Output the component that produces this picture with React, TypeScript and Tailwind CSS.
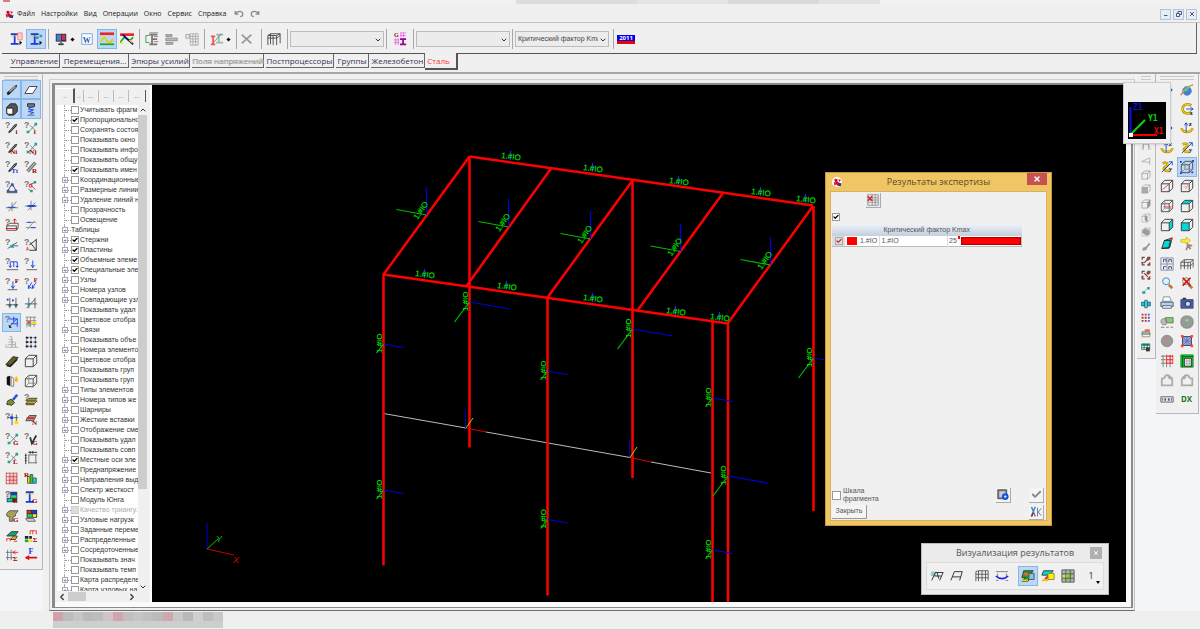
import React from 'react';
import { ChevronDown, ChevronLeft, ChevronRight, ChevronUp, Check, X } from 'lucide-react';

// Short helpers for the 16x16 toolbar drawings
const s = (d: string, stroke = '#444', w = 1) => <path d={d} stroke={stroke} strokeWidth={w} fill="none" />;
const f = (d: string, fill = '#444', stroke = 'none') => <path d={d} fill={fill} stroke={stroke} />;
const t = (x: number, y: number, str: string, fill = '#900', size = 8) => (
  <text x={x} y={y} fill={fill} fontSize={size} fontWeight="bold" fontFamily="Liberation Serif, serif">
    {str}
  </text>
);

const help = (
  <text x="0" y="8" fill="#777" fontSize="10" fontWeight="bold" fontFamily="Liberation Sans, sans-serif">
    ?
  </text>
);
const cube = (c = '#333') => s('M1.5 5.5h9v9h-9zM1.5 5.5l4-4h9l-4 4M14.5 1.5v9l-4 4', c);
const wire = (
  <>
    {cube('#444')}
    {s('M5.5 1.5v9h9M5.5 10.5l-4 4', '#888')}
  </>
);
const teal = '#00d8d8';
const beam = (
  <>
    {f('M4 12L11 4l3-1-1 3-7 7-2 1z', '#333')}
    {s('M6 11l6-6', '#999')}
  </>
);
const nodes = (
  <>
    {s('M5 13L14 3M7 5l6 6', '#777')}
    {f('M3 11h3v3H3zM12 2h3v3h-3z', '#1aa59a')}
  </>
);
const rotate = (c: string) => (
  <>
    {s('M13 4C8 1 3 3 3 8s5 6 10 4', '#b89400', 3)}
    {s('M13 4C8 1 3 3 3 8s5 6 10 4', '#ffe14a', 1)}
    {s('M7 8h8M12 6l3 2-3 2', c)}
  </>
);
const rotateZ = (
  <>
    {s('M2 8c0 6 12 6 12 0', '#b89400', 3)}
    {s('M2 8c0 6 12 6 12 0', '#ffe14a', 1)}
    {s('M7 13V2M5 5l2-3 2 3', '#14c')}
    {t(10, 6, 'z', '#222', 8)}
  </>
);
const rotateY = (
  <>
    {s('M3 4c6-3 7 2 3 4s0 6 5 4', '#b89400', 3)}
    {s('M3 4c6-3 7 2 3 4s0 6 5 4', '#ffe14a', 1)}
    {s('M2 14L14 2M10 2h4v4', '#14c')}
    {t(10, 13, 'y', '#222', 8)}
  </>
);
const section = (
  <>
    {s('M2 2.5h9M2 13.5h9', '#1439e0', 2)}
    {s('M6.5 3v10', '#1439e0', 2)}
    {s('M2 4.5h9', '#e0c800')}
  </>
);

const leftIcons: [string, React.ReactNode][] = [
  ['Стержень', <>{f('M3 14l-1-3 9-8 3-1-1 3-8 8z', '#222')}{s('M5 10l7-6', '#999', 2)}</>],
  ['Пластина', f('M1 12L6 4h9l-5 8z', '#fff', '#333')],
  ['Объемный элемент', <>{f('M2 6l4-4h6l2 3v6l-4 4H4l-2-2z', '#555', '#222')}{f('M2 7h7v7H4l-2-2z', '#fff', '#222')}</>],
  ['Специальный элемент', <>{f('M4 2h8v3l-2 1H6L4 5z', '#777', '#222')}{s('M8 6l-3 2 6 1-6 2 6 1-4 2', '#1439e0')}{s('M4 15h8', '#555')}</>],
  ['Номера стержней', <>{help}{beam}{t(12, 15, 'i')}</>],
  ['Номера узлов', <>{help}{nodes}{t(11, 15, 'i')}</>],
  ['Типы стержней', <>{help}{beam}{t(6, 15, 'Ni')}</>],
  ['Типы узлов', <>{help}{nodes}{t(6, 15, 'Nj')}</>],
  ['Типы элементов', <>{help}{beam}{t(7, 15, 'Tt', '#1439e0')}</>],
  ['Радиус', <>{help}{s('M4 13L13 3', '#777', 4)}{s('M4 13L13 3', '#ddd')}{t(9, 15, 'R')}</>],
  ['Связи', <>{help}{s('M8 4l-5 9h10zM2 14.5h12', '#335')}{f('M7 4h3v3H7zM2 11h3v3H2zM11 11h3v3h-3z', '#35a')}</>],
  ['Шарниры', <>{help}{s('M7 5l5-2M8 6l5 5M5 10l3 3', '#d22')}{f('M11 1h3v3h-3zM7 11h3v3H7z', '#1aa59a')}{s('M6 5h3v3H6z', '#d22')}</>],
  ['Оси по X', <>{s('M1 10h14M4 14L13 3M8 4v10', '#777')}{s('M3 9.5h9', '#1439e0', 1)}</>],
  ['Оси по Y', <>{s('M1 8h14M4 13L13 4M8 2v11', '#777')}{s('M4 8h9', '#1439e0', 2)}</>],
  ['Сечения', <>{help}{s('M2 9h11v5H2zM2 9l3-3h10v5l-2 3', '#444')}{s('M1 12h14M11 6V1M9 3l2-2 2 2', '#d11')}</>],
  ['Смещения', <>{s('M2 5h12M2 11h12M4 13l8-10', '#888')}{s('M4 5h4M8 11h5', '#1439e0', 1)}</>],
  ['Узел', <>{help}{s('M3 12L14 5M7 9h8M10 7l-3 2 3 2', '#357')}{f('M6 8h3v3H6z', '#1aa59a')}</>],
  ['Местные оси', <>{help}{s('M14 1v13H6M6 8l8-6M7 5l7 9', '#222')}{f('M2 14l2-5 2 5z', '#f66')}</>],
  ['Распределенная нагрузка', <>{help}{s('M6 5.5h8v6M6 5.5v6M10 5.5v6M4.5 10l1.500 2 1.500-2M12.500 10l1.500 2 1-2', '#1439e0')}{s('M2 14.5h13', '#555')}</>],
  ['Узловая нагрузка', <>{help}{s('M10 4v8M8 9l2 3 2-3', '#1439e0')}{s('M3 14.5h12', '#555')}</>],
  ['Сила', <>{help}{s('M9 5v8M7 10l2 3 2-3', '#1439e0')}{t(11, 7, 'F')}{s('M3 14.500h11', '#555')}</>],
  ['Силы', <>{help}{s('M9 6l-4 7M14 6l-5 7M5 9v4l3-1M10 9l-1 4 3-1', '#1439e0')}{t(11, 6, 'F', '#900', 7)}</>],
  ['Размеры', <>{s('M5.500 2v12M12.500 2v12M1 10h14', '#555')}{f('M2 3h2v2H2zM8 4h2v2H8z', '#1439e0')}{f('M4 9h3v3H4zM11 9h3v3h-3z', '#366')}</>],
  ['Наклон', <>{s('M5.500 2v12M12.500 2v12M1 9h14M3 14L13 3', '#555')}{f('M4 8h3v3H4z', '#1aa59a')}</>],
  ['Местные оси элементов', <>{help}{s('M5 4.500h9v9M5 13L14 4M7 10h7M10 2v6', '#1439e0')}{f('M4 11l4 3-3 1z', '#222')}</>],
  ['Сетка', <>{s('M2 2.500h12M2 6.500h12M2 10.500h12M3.500 2v12M7.500 2v12M11.500 2v12', '#888')}{f('M4 7h3v3H4z', '#f33')}{f('M8 8h6v2H8z', '#fd0')}{f('M5 11h2v2H5z', teal)}</>],
  ['Группы', s('M1 14h14M3 11h9M4 8h7M4 5h4v9M8 5v9M12 8v6M1 11v3M5 2h3v3', '#aaa')],
  ['Узлы', <>{s('M3 3h12M3 8h12M3 13h12', '#8a9be8')}{s('M3 2v13M8 2v13M13 2v13', '#888')}{f('M2 2h3v2H2zM2 7h3v2H2zM2 12h3v2H2zM7 2h2v2H7zM7 7h2v2H7zM7 12h2v2H7zM12 2h2v2h-2zM12 7h2v2h-2zM12 12h2v2h-2z', '#223')}</>],
  ['Балка', <>{f('M1 12L9 3l6 1-8 9z', '#655f24', '#222')}{s('M2 13l4 1 8-8', '#222', 2)}</>],
  ['Каркас', cube('#333')],
  ['Панель', <>{f('M2 3l4-1v12l-4-2z', '#111')}{s('M7 3v11h3V5z', '#777')}{f('M13 2c3 5 2 7 0 7s-3-2 0-7', '#fb0')}</>],
  ['Проволочный вид', wire],
  ['Кисть', <>{s('M9 8l5-6', '#3156c9', 3)}{f('M3 9l4-2 4 4-3 3-6-1z', '#7a8f25', '#333')}</>],
  ['Слои', <>{f('M2 12l3-3h10l-3 3z', '#c7b443', '#444')}{f('M2 9l3-3h10l-3 3z', '#a89322', '#444')}{f('M2 12h10v2H2z', '#776a20')}{help}</>],
  ['Привязка', <>{help}{s('M3 6.500h12M8 2v13M13 3v10', '#456')}{f('M11 10h4v4h-4z', '#fd0')}{f('M6 5h3v3H6z', '#1439e0')}</>],
  ['Нумерация', <>{f('M2 10l4-6h8l-3 6z', '#999', '#444')}{s('M3 7h9', '#e22', 2)}{t(9, 15, 'N')}</>],
  ['Группы узлов', <>{help}{nodes}{t(9, 15, 'G')}</>],
  ['Группы элементов', <>{help}{s('M7 6l2 7 5-9', '#333', 2)}{t(10, 15, 'G', '#900', 7)}</>],
  ['Длины', <>{help}{nodes}{t(9, 15, 'L')}</>],
  ['Линейка', <>{s('M5 4.500h10M5 13.500h10M5.500 4v10M13.500 4v10', '#666')}{s('M2 3v12M5 1.500h10', '#222')}{s('M1 5h2M1 8h2M1 11h2M7 0v3M10 0v3', '#222')}</>],
  ['Таблица', <>{f('M4 4h10v10H4z', '#fbb')}{s('M1.500 2v13M5.500 2v13M9.500 2v13M13.500 2v13M1 2.500h13M1 6.500h13M1 10.500h13M1 14.500h13', '#b55')}</>],
  ['Диаграмма', <>{f('M4 6h3v8H4z', '#fd0', '#555')}{f('M7 4h3v10H7z', '#2c4', '#555')}{f('M10 8h4v6h-4z', teal, '#555')}{t(0, 7, 'R')}</>],
  ['Изополя', <>{f('M2 2h12v12H2z', '#444')}{f('M7 3h6v3H7z', '#1439e0')}{f('M7 6h6v3H7z', '#2d4')}{f('M3 10h5v3H3z', '#0cc')}{f('M2 2h4v7H2z', '#ddd')}{help}{t(9, 15, 'E')}</>],
  ['Жесткости', <>{section}{t(9, 15, 'G')}</>],
  ['Тавр', <>{f('M2 5l3-3h10l-3 4v2l-3 1v5H5V9L2 8z', '#aaa05a', '#555')}{t(9, 15, 'G')}</>],
  ['Палитра', <>{f('M3 1h12v9H3z', '#333')}{f('M4 2h4v3H4z', '#f22')}{f('M9 2h5v3H9z', '#1439e0')}{f('M4 6h5v3H4z', '#2d4')}{f('M10 6h4v3h-4z', '#fe3')}{f('M2 11h9l2 3H4z', '#ddd', '#555')}</>],
  ['Плиты', <>{f('M2 8l5-5h8l-4 5z', '#1a9e75', '#333')}{f('M6 12l4-4h4l-2 4z', '#e8b020', '#333')}{s('M2 14v-3h4v3M10 14h4', '#e22')}</>],
  ['Суммы', <>{s('M7 6V2h7v4M10 2v4', '#e22')}{f('M1 8h4v3H1zM6 8h3v3H6z', '#222')}{f('M1 12h4v3H1z', '#1a3')}{f('M6 12h3v3H6z', '#fd0')}{t(10, 15, 'Σ')}</>],
  ['Реакции', <>{s('M3 2v12M7 2v12M1 5h9M1 11h9', '#678')}{s('M9 5h6M12 3L9 5l3 2', '#e22')}{t(9, 15, 'Σ')}</>],
  ['Усилие', <>{t(5, 7, 'F', '#1439e0', 9)}{s('M2 11h13', '#d11', 2)}{f('M1 11l5-3v6z', '#d11')}</>],
];

const rightIcons: [string, React.ReactNode][] = [
  ['Вид сверху', s('M3 8h10M10 5l3 3-3 3', '#14c', 2)],
  ['Орбита', <>{f('M3 9a5 5 0 1 1 8 4 5 5 0 0 1-8-4', '#3a7fe0', '#68a')}{s('M1 14C3 9 10 3 15 2', '#c96', 2)}{f('M7 5l3 1-1 3-3 1z', '#4c7')}</>],
  ['Вид слева', s('M8 3v10M5 10l3 3 3-3', '#14c', 2)],
  ['Поворот X', <>{rotate('#14c')}{t(11, 15, 'x', '#222', 7)}</>],
  ['Вид справа', s('M3 8h10M10 5l3 3-3 3', '#14c', 2)],
  ['Поворот Z', rotateZ],
  ['Поворот назад Z', rotateZ],
  ['Поворот Y', rotateY],
  ['Поворот назад Y', rotateY],
  ['Проекция', <>{wire}{f('M0 1h2v2H0zM14 0h2v2h-2zM0 14h2v2H0zM13 13h2v2h-2z', '#1439e0')}</>],
  ['Сечение XOY', <>{cube()}{s('M3 12l7-6', '#e33')}</>],
  ['Сечение XOZ', <>{cube()}{s('M4 9h5M6 12l5-9', '#e99')}</>],
  ['Сечение YOZ', <>{wire}{s('M4 9h9', '#e33')}</>],
  ['Верхняя грань', <>{f('M1.500 5.500l4-4h9l-4 4z', teal)}{cube()}</>],
  ['Боковая грань', <>{f('M10.500 5.500l4-4v9l-4 4z', teal)}{cube()}</>],
  ['Передняя грань', <>{f('M1.500 5.500h9v9h-9z', teal)}{cube()}</>],
  ['Объем', <>{f('M2 13l3-9 9-3-3 11z', teal, '#222')}{s('M5 4h7l-2 9H2', '#222')}{s('M12 4l2-3', '#e33', 2)}</>],
  ['Отсечение', <>{s('M8 6l1 4-2 5M9 9l5 1M9 9l3 5', '#987', 2)}{f('M1 3h6V0l5 4-5 4V6H1z', '#fe3', '#cb3')}</>],
  ['Несколько видов', <>{s('M1 1h14v14H1zM1 8h14M8 1v14', '#78b')}{s('M4 6V3h3v3M10 6V3h3v3M4 14v-3h3M10 14v-3h3v3', '#444')}</>],
  ['Общий вид', s('M1 6h11l3-3H5L1 6v8M5 6v8M9 6v8M12 6v8M15 3v9M1 10h11l3-3M5 3v8', '#555')],
  ['Лупа', <>{s('M10 10l4 4', '#bb7c40', 3)}<circle cx="7" cy="6" r="4" fill="#d9f3ff" stroke="#4179bd" /></>],
  ['Отмена лупы', <>{s('M10 10l4 4', '#bb7c40', 3)}<circle cx="7" cy="6" r="4" fill="#cfe" stroke="#777" />{s('M3 2l9 9M12 2l-9 9', '#d11', 2)}</>],
  ['Печать', <>{f('M4 1h7l2 5H3z', '#fff', '#789')}{f('M1 7h14v5H1z', '#b8cdf0', '#456')}{f('M3 11h10v3H3z', '#e8edf6', '#567')}</>],
  ['Снимок', <>{f('M1 4h14v10H1z', '#405aa8', '#557')}{f('M3 2h4v2H3z', '#333')}<circle cx="9" cy="9" r="3" fill="#cde" stroke="#224" /></>],
  ['Фильтр', <>{f('M1 8c0-5 6-5 6-1v4H3z', '#bbb', '#888')}{f('M6 3h9v6H8z', '#8c7', '#675')}{s('M1 14h4M7 14h3M12 14h3', '#777')}</>],
  ['Выполнить', <><rect x="1" y="1" width="14" height="14" rx="6" fill="#999" stroke="#888" /><circle cx="8" cy="6" r="1.5" fill="#7e7" /></>],
  ['Остановить', <><circle cx="8" cy="8" r="6.500" fill="#999" stroke="#888" /><circle cx="8" cy="6" r="1.5" fill="#e76" /></>],
  ['Показать все', <>{f('M3 3h10v10H3z', '#aad', '#224')}{s('M3 3l10 10M13 3L3 13M8 3v10M3 8h10', '#5470c0')}{f('M1 1h3v3H1zM12 1h3v3h-3zM1 12h3v3H1zM12 12h3v3h-3z', '#f44')}</>],
  ['Сетка осей', <>{s('M1 2.500h14M1 6.500h14M1 10.500h14M3.500 1v14M7.500 1v14M11.500 1v14', '#777')}{s('M7 2.500h8M7 6.500h8M7 10.500h8M11.500 1v10M14.500 1v10M7.500 1v10', '#f33')}</>],
  ['Фрагмент', <>{f('M1 1h14v14H1z', '#1c3', '#182')}{s('M2 3h13M3 2v13', '#052')}{f('M5 5h8v9H5z', '#eee', '#222')}{s('M5 8h8M5 11h8M8 5v9M11 5v9', '#aaa')}</>],
  ['Назад', s('M2 6v8h12V6h-3M2 6h3M5 6c1-5 6-4 6-1M9 4l2 2 2-2', '#aaa', 2)],
  ['Вперед', s('M2 6v8h12V6h-3M2 6h3M11 6C10 1 5 2 5 5M7 4L5 6 3 4', '#aaa', 2)],
  ['Масштаб', <>{s('M1 5.500h14v6H1zM3 7v3M13 7v3', '#556')}{f('M5 7h2v3H5zM9 7h2v3H9z', '#556')}</>],
  ['DXF', <text x="1" y="11" fill="#17701e" fontSize="9" fontWeight="bold" fontFamily="Open Sans, sans-serif">DX</text>],
];

const grayCube = <>{f('M1.500 5.500h9v9h-9z', '#aaa')}{cube('#999')}</>;
const narrowIcons: [string, React.ReactNode][] = [
  ['Рама 1', s('M3 14V4h10v10', '#999')],
  ['Рама 2', s('M3 14V4h10v10', '#999')],
  ['Рама 3', s('M3 14V4h10v10', '#999')],
  ['Рама 4', s('M3 14V4h10v10', '#999')],
  ['Портал', s('M1 14l3-9h8l3 9M4 5v9M12 5v9', '#999')],
  ['Ферма', s('M1 9l13-6v11M1 9l13 1', '#999')],
  ['Куб', cube('#888')],
  ['Грань', grayCube],
  ['Грань слева', <>{f('M10.500 5.500l4-4v9l-4 4z', '#999')}{cube('#888')}</>],
  ['Разрез', <>{cube('#aaa')}{f('M6 2l4 4v9l-4-4z', '#999')}</>],
  ['Тело', <>{f('M2 5l5-3 7 4v6l-5 2-7-5z', '#999')}{cube('#aaa')}</>],
  ['Кисть', f('M2 14l1-5 5-2 5-6 2 2-5 6-2 4z', '#999')],
  ['Выбор узлов', <>{s('M2 6V2h4M10 2h4v4M14 10v4h-4M6 14H2v-4M5 11l6-6', '#555', 2)}{f('M1 9h3v3H1zM9 3h4v4H9zM11 12h3v3h-3z', '#c22')}</>],
  ['Выбор элементов', <>{s('M2 6V2h4M10 2h4v4M14 10v4h-4M6 14H2v-4M5 5l6 6', '#555', 2)}{f('M1 9h3v3H1zM9 3h4v4H9zM11 12h3v3h-3z', '#c22')}</>],
  ['Стержень по узлам', <>{s('M4 11l8-7', '#999')}{f('M2 10h5v4H2zM10 3h4v4h-4z', '#1aa59a')}</>],
  ['Объединение', <>{f('M1 5h14v6H1z', '#1cc', '#135')}{f('M6 2h4v12H6z', '#6dd', '#135')}</>],
  ['Точки', <>{f('M1 1h3v3H1zM6 1h3v3H6zM1 6h3v3H1zM6 6h3v3H6zM1 11h3v3H1zM6 11h3v3H6z', '#b33')}{f('M11 1h3v3h-3zM11 6h3v3h-3zM11 11h3v3h-3z', '#55e')}</>],
  ['Цвет', <>{f('M2 6h11l2 4H1z', '#8cd', '#456')}{f('M6 2h8v4H6z', '#f63')}{f('M2 10h12v4H2z', '#fec', '#765')}</>],
  ['Список', <>{f('M1 3h13v9H1z', '#cfe', '#244')}{f('M1 3h13v3H1z', '#1a8a78')}{s('M1 9h13M5 3v9M10 3v9', '#244')}{f('M8 9h6v6H8z', '#433')}</>],
];

// [expandable, checkbox state, caption]; state: 0 off, 1 on, 2 disabled, -1 none
const tree: [boolean, number, string][] = [
  [false, 0, 'Учитывать фрагм'],
  [false, 1, 'Пропорционально'],
  [false, 0, 'Сохранять состоя'],
  [false, 0, 'Показывать окно'],
  [false, 0, 'Показывать инфо'],
  [false, 0, 'Показывать общу'],
  [false, 1, 'Показывать имен'],
  [true, 0, 'Координационные'],
  [true, 0, 'Размерные линии'],
  [true, 0, 'Удаление линий н'],
  [false, 0, 'Прозрачность'],
  [false, 0, 'Освещение'],
  [true, -1, 'Таблицы'],
  [true, 1, 'Стержни'],
  [true, 1, 'Пластины'],
  [false, 1, 'Объемные элеме'],
  [true, 1, 'Специальные эле'],
  [true, 0, 'Узлы'],
  [true, 0, 'Номера узлов'],
  [true, 0, 'Совпадающие узл'],
  [false, 0, 'Показывать удал'],
  [false, 0, 'Цветовое отобра'],
  [true, 0, 'Связи'],
  [false, 0, 'Показывать объе'],
  [true, 0, 'Номера элементо'],
  [false, 0, 'Цветовое отобра'],
  [false, 0, 'Показывать груп'],
  [false, 0, 'Показывать груп'],
  [true, 0, 'Типы элементов'],
  [true, 0, 'Номера типов же'],
  [true, 0, 'Шарниры'],
  [true, 0, 'Жесткие вставки'],
  [true, 0, 'Отображение сме'],
  [false, 0, 'Показывать удал'],
  [false, 0, 'Показывать совп'],
  [true, 1, 'Местные оси эле'],
  [true, 0, 'Преднапряжение'],
  [true, 0, 'Направления выд'],
  [true, 0, 'Спектр жесткост'],
  [false, 0, 'Модуль Юнга'],
  [true, 2, 'Качество триангу.'],
  [true, 0, 'Узловые нагрузк'],
  [true, 0, 'Заданные переме'],
  [true, 0, 'Распределенные'],
  [true, 0, 'Сосредоточенные'],
  [false, 0, 'Показывать знач'],
  [false, 0, 'Показывать темп'],
  [true, 0, 'Карта распределе'],
  [true, 0, 'Карта узловых на'],
];

const menu = ['Файл', 'Настройки', 'Вид', 'Операции', 'Окно', 'Сервис', 'Справка'];

const Icon = ({ children, className = 'size-4' }: { children: React.ReactNode; className?: string }) => (
  <svg viewBox="0 0 16 16" className={`${className} shrink-0`} aria-hidden="true">
    {children}
  </svg>
);

interface ToolProps {
  label: string;
  active?: boolean;
  children: React.ReactNode;
}

const Tool = ({ label, active, children }: ToolProps) => (
  <button
    aria-label={label}
    className={`flex h-5 w-5 shrink-0 items-center justify-center ${active ? 'border border-[#86b5e8] bg-[#bbd7f5]' : ''}`}
  >
    <Icon className="size-[14px]">{children}</Icon>
  </button>
);

const Sep = () => <div className="h-5 w-px shrink-0 bg-[#a5a5a5]" />;

const Logo = ({ className }: { className?: string }) => (
  <Icon className={className}>
    {f('M2 3c3-3 7-1 6 2s4 2 5 5-4 6-7 2', '#c8102e')}
    {f('M1 6l5 4-3 4zM9 2l5 1-2 4z', '#c8102e')}
    {f('M10 10l5-1-1 5h-5z', '#1c3f8c')}
  </Icon>
);

const Grip = () => (
  <div className="mx-1 h-1 shrink-0 border-y border-[#c9c9c9]" />
);

const Drop = ({ label, value }: { label: string; value?: string }) => (
  <div className="relative mx-[2px] flex h-4 w-[94px] shrink-0">
    <select
      aria-label={label}
      className="block h-4 w-full appearance-none overflow-hidden border border-[#bcbcbc] bg-[#ececec] pr-[10px] pl-[2px] font-['Liberation_Sans',sans-serif] text-[7px] leading-[14px] text-[#444]"
    >
      <option>{value}</option>
    </select>
    <ChevronDown className="pointer-events-none absolute top-[5px] right-[2px] size-2 text-[#333]" strokeWidth={3} />
  </div>
);

const TitleSliver = () => (
  <div className="flex h-1 shrink-0 justify-between overflow-hidden bg-[#f3f1f1]">
    <div className="ml-[3px] h-[2px] w-[7px] bg-[#d77c80]" />
    <div className="mr-[320px] flex h-1 w-[364px] bg-[#e2e2e2]">
      <div className="w-1/3 bg-[#dddddd]" />
      <div className="w-1/4 bg-[#e4e4e4]" />
      <div className="w-1/4 bg-[#dadada]" />
    </div>
  </div>
);

const MenuBar = () => (
  <nav className="flex h-[19px] shrink-0 items-center border-b border-[#c4c4c4] pt-[2px] pl-[5px] text-[7px] text-[#222]">
    <Logo className="mr-[3px] size-[9px]" />
    {menu.map((item) => (
      <button key={item} className="mr-[6px]">
        {item}
      </button>
    ))}
    <button aria-label="Отменить" className="ml-[2px] mr-[6px]">
      <Icon className="size-[10px]">{s('M2 3v5h5M2 8c3-5 12-6 12 0 0 3-2 4-4 4', '#888', 2)}</Icon>
    </button>
    <button aria-label="Вернуть">
      <Icon className="size-[10px]">{s('M14 3v5H9M14 8C11 3 2 2 2 8c0 3 2 4 4 4', '#888', 2)}</Icon>
    </button>
    <div className="mr-[3px] ml-auto flex gap-[2px]">
      {['M4 11h7', 'M3 7h6v6H3zM6 7V3h7v6H9', 'M4 4l8 8M12 4l-8 8'].map((d, i) => (
        <button
          key={d}
          aria-label={['Свернуть', 'Восстановить', 'Закрыть окно'][i]}
          className="flex h-[11px] w-[11px] items-center justify-center border border-[#b4c4d6] bg-[#e3edf8]"
        >
          <Icon className="size-[8px]">{s(d, '#557', 2)}</Icon>
        </button>
      ))}
    </div>
  </nav>
);

const Toolbar = () => (
  <div className="mr-[3px] ml-[2px] flex h-[30px] shrink-0 items-center border-r border-[#666] pt-[2px] pl-1">
    <Tool label="Сечение">{section}{f('M10 1h5v8h-5z', '#fcc', '#e88')}{f('M12 10l3 2-3 3z', '#111')}</Tool>
    <Tool label="Сечение и сетка" active>{section}{f('M8 5h3v3H8zM12 3h3v3h-3z', '#39b')}{f('M12 10l3 2-3 3z', '#111')}</Tool>
    <div className="mx-[2px]"><Sep /></div>
    <Tool label="Экран">{f('M2 2h12v9H2z', '#334')}{f('M3 3h5v7H3z', '#57c')}{f('M9 3h4v6H9z', '#c34')}{f('M5 13h6v2H5z', '#333')}{f('M7 11h2v3H7z', '#666')}</Tool>
    <div className="mr-[3px] size-[3px] rotate-45 bg-[#111]" />
    <Tool label="Word">{f('M2 2h12v12H2z', '#fff', '#6a9bd8')}{t(3, 12, 'W', '#1d5fb8', 9)}</Tool>
    <Tool label="Эпюра" active>{s('M0 2h16', '#e22', 3)}{s('M0 14h16', '#1a3', 2)}{s('M1 11c4-9 6-2 8 0s4 0 6-3', '#e5cf00', 2)}</Tool>
    <Tool label="Линия влияния">{s('M0 3h16', '#e22', 3)}{s('M0 12l5-6 6 4 4-4', '#1a3', 2)}{s('M3 3l12 11', '#118', 2)}{f('M1 10l3 3-3 1zM10 9h4v4z', '#fd0')}</Tool>
    <div className="mx-[2px]"><Sep /></div>
    <Tool label="Чертеж">{s('M5 3h9M8 3v11M5 14h9M8 8h6', '#777', 2)}{s('M5 1h10M10 5h5M10 11h5', '#777')}{s('M5 4H1v8h4', '#393')}</Tool>
    <Tool label="Строки">{f('M1 3h7v2H1zM1 7h13v3H1zM1 12h8v2H1z', '#bbb', '#888')}</Tool>
    <Tool label="Параметры">{s('M6 2h9v13H6zM6 5h9M6 8h9M6 11h9M9 2v13M12 2v13', '#aaa')}{s('M1 3h4v4H1z', '#999')}</Tool>
    <div className="mx-[2px]"><Sep /></div>
    <Tool label="Печать сечения">{s('M7 3h8M10 3v9M7 12h8', '#9ba', 2)}{s('M1 5h5M3.500 5v9M1 14h5', '#e55', 2)}{s('M4 12L13 2', '#777')}</Tool>
    <div className="mr-[6px] size-[3px] rotate-45 bg-[#111]" />
    <Sep />
    <Tool label="Удалить">{s('M2 3l11 10M13 3L2 13', '#999', 2)}</Tool>
    <div className="mr-[2px] ml-1"><Sep /></div>
    <Tool label="Рама">{s('M1 4l3-2h11v11M1 4v11M4 2v12M1 7h10l4-3M7 4v11M11 4v11M1 4h10l4-2', '#444')}</Tool>
    <div className="ml-[3px]"><Sep /></div>
    <Drop label="Загружение" />
    <Sep />
    <div className="mx-[3px]">
      <Tool label="Группы стали">{t(1, 6, 'G', '#900', 7)}{s('M8 1h7M8 4h7M9 1v5M12 1v5M1 9h6M1 12h6M3 7v8M6 7v8', '#e6e')}{s('M8 8h7M11.500 8v7M8 14h7', '#909', 2)}</Tool>
    </div>
    <Sep />
    <Drop label="Группа" />
    <Sep />
    <Drop label="Критерий" value="Критический фактор Kmax" />
    <div className="mr-[3px] ml-[2px]"><Sep /></div>
    <button
      aria-label="Нормы 2011"
      className="flex h-[9px] w-[18px] justify-center border-b-[3px] border-[#f00000] bg-[#0000f0] text-[6px] leading-[6px] font-bold text-white"
    >
      2011
    </button>
  </div>
);

const tabClass = 'h-[14px] shrink-0 border-r border-b border-[#666] text-center text-[8px] leading-[12px] whitespace-nowrap';

const Tabs = () => (
  <div className="flex h-[21px] shrink-0 border-b-2 border-[#a5a5a5]">
    <div role="tablist" className="mr-[3px] ml-[2px] flex w-full gap-[2px] border-t border-[#555] pl-2 text-[#335]">
      <button role="tab" className={`${tabClass} w-[50px]`}>Управление</button>
      <button role="tab" className={`${tabClass} w-[67px]`}>Перемещения...</button>
      <button role="tab" className={`${tabClass} w-[59px]`}>Эпюры усилий</button>
      <button role="tab" disabled className={`${tabClass} w-[72px] text-[#999] [text-shadow:1px_0_0_#bbb]`}>Поля напряжений</button>
      <button role="tab" className={`${tabClass} w-[68px]`}>Постпроцессоры</button>
      <button role="tab" className={`${tabClass} w-[33px]`}>Группы</button>
      <button role="tab" className={`${tabClass} w-[54px]`}>Железобетон</button>
      <button
        role="tab"
        aria-selected="true"
        className="-mt-px -ml-[2px] h-[17px] w-[33px] shrink-0 border-r-2 border-b-2 border-[#555] bg-[#f0f0f0] pr-1 text-center text-[8px] leading-[14px] text-[#f33]"
      >
        Сталь
      </button>
    </div>
  </div>
);

const TreeRow = ({ item }: { item: [boolean, number, string] }) => {
  const [open, state, text] = item;
  return (
    <li className="flex h-[10px] items-center">
      <div className="relative flex h-[10px] w-[14px] shrink-0 items-center">
        <div className="absolute left-[7px] h-[10px] border-l border-dotted border-[#aaa]" />
        <div className="ml-2 w-[6px] border-t border-dotted border-[#999]" />
        {open && (
          <button
            aria-label="Развернуть"
            className="absolute left-[5px] flex size-[6px] items-center justify-center border border-[#a8a8b8] bg-white text-[6px] leading-none text-[#448]"
          >
            +
          </button>
        )}
      </div>
      <label className={`flex items-center whitespace-nowrap ${state === 2 ? 'text-[#aaa]' : 'text-[#333]'}`}>
        {state >= 0 && (
          <span className="relative mr-px size-2 shrink-0">
            <input
              type="checkbox"
              defaultChecked={state === 1}
              disabled={state === 2}
              className="peer block size-2 appearance-none border border-[#999] bg-white disabled:border-[#ccc] disabled:bg-[#ddd]"
            />
            <Check className="pointer-events-none absolute top-px left-px hidden size-[6px] text-black peer-checked:block" strokeWidth={5} />
          </span>
        )}
        {text}
      </label>
    </li>
  );
};

const TreePanel = () => (
  <aside className="flex w-[97px] shrink-0 flex-col border-r-2 border-white bg-[#f0f0f0] pr-[3px] pl-[2px]">
    <div className="mt-[3px] mb-[2px] flex h-[15px] shrink-0 items-center text-[7px] text-[#889]">
      <button className="h-[15px] w-[18px] border-t border-r-2 border-t-white border-r-[#555] text-[#f66]">..</button>
      <button className="h-3 w-[9px] border-r border-[#bbb] leading-3">..</button>
      <button className="h-3 w-[15px] border-r border-[#bbb] leading-3">...</button>
      <button className="h-3 w-[15px] border-r border-[#bbb] leading-3">...</button>
      <button className="h-3 w-[15px] border-r border-[#bbb] leading-3">...</button>
      <button className="h-3 w-[17px] border-r border-[#555] leading-3">...</button>
    </div>
    <div className="flex min-h-0 flex-1">
      <ul className="min-w-0 flex-1 overflow-hidden bg-white font-['Liberation_Sans',sans-serif] text-[7px] leading-[10px]">
        {tree.map((item, i) => (
          <TreeRow key={i} item={item} />
        ))}
      </ul>
      <div className="flex w-[9px] shrink-0 flex-col items-center bg-[#f0f0f0]">
        <ChevronUp className="my-px size-2 shrink-0 text-[#333]" strokeWidth={3} />
        <div className="h-[77%] w-[9px] bg-[#cdcdcd]" />
        <ChevronDown className="mt-auto size-2 shrink-0 text-[#333]" strokeWidth={3} />
      </div>
    </div>
    <div className="flex h-[11px] shrink-0 items-center">
      <ChevronLeft className="size-[10px] text-[#333]" strokeWidth={3} />
      <div className="ml-[1px] h-[9px] w-[18px] bg-[#cdcdcd]" />
      <ChevronRight className="mr-[10px] ml-auto size-[10px] text-[#333]" strokeWidth={3} />
    </div>
  </aside>
);

const members = [
  'M469.5 156.500L813 205.500',
  'M383.5 274.500L728 323.500',
  'M469.5 156.500L383.5 274.500',
  'M551 168.500L466.5 286',
  'M632.5 180.500L547.5 297.500',
  'M723 193L637.5 310.500',
  'M813 206L728 323',
  'M383.5 274V565.500',
  'M469.5 156V447.500',
  'M547.5 298V595.500',
  'M632.5 180V478',
  'M712.5 321V620',
  'M728 323V620',
  'M813.5 206V511',
];

const chordLabels = [
  [501, 158], [583, 170], [669, 183], [751, 194], [796, 201],
  [415, 276], [497, 288], [583, 300], [666, 313], [710, 319],
];

const rafterLabels = [[426.5, 215], [508.5, 227], [590.5, 239], [680.5, 251.5], [770.5, 265]];

// Column mid points with the length of their local axes
const columnLabels = [
  [383.5, 344, 1], [383.5, 490, 1], [547.5, 371, 1], [547.5, 519.5, 1], [712.5, 398, 1], [712.5, 550, 1],
  [469.5, 302, 2], [632.5, 329, 2], [813.5, 358, 2], [728, 476, 2],
];

const Scene = () => (
  <svg
    viewBox="152 85 974 517"
    preserveAspectRatio="xMinYMin slice"
    className="block h-full w-full font-['Liberation_Sans',sans-serif] text-[8px]"
    role="img"
    aria-label="Расчетная схема"
  >
    <g fill="none">
      <path d="M383.5 413.500L466 428M486 432L630 457.500M651 462L711 473" stroke="#bbb" />
      {members.map((d) => (
        <path key={d} d={d} stroke="#f00" strokeWidth="2.5" />
      ))}
      <path d="M466 428l20 4M630 457.500l21 4.500" stroke="#d00" />
      <path d="M465.5 409v19M629.5 439v18" stroke="#0000b8" />
      <path d="M466 428l7-10M630 457.500l7-10.500" stroke="#8d0" />
    </g>
    <g strokeWidth="1.2">
      {chordLabels.map(([x, y]) => (
        <path key={`${x}-${y}`} d={`M${x + 9.5} ${y - 7}v9`} stroke="#22f" />
      ))}
      {rafterLabels.map(([x, y]) => (
        <g key={x}>
          <path d={`M${x} ${y - 28}V${y}`} stroke="#00d" />
          <path d={`M${x - 30} ${y - 5.5}L${x} ${y}`} stroke="#0b0" />
        </g>
      ))}
      {columnLabels.map(([x, y, k]) => (
        <g key={`${x}-${y}`}>
          <path d={`M${x} ${y}l${20 * k} ${3.5 * k}`} stroke="#00d" />
          <path d={k === 1 ? `M${x} ${y}l-7 9` : `M${x} ${y}l-15 20`} stroke="#0b0" />
        </g>
      ))}
    </g>
    <g fill="#0d0" stroke="#0d0" strokeWidth="0.2">
      {chordLabels.map(([x, y]) => (
        <text key={`${x}-${y}`} x={x} y={y} transform={`rotate(7 ${x} ${y})`}>1.#IO</text>
      ))}
      {rafterLabels.map(([x, y]) => (
        <text key={x} x={x - 9} y={y + 5} transform={`rotate(-56 ${x - 9} ${y + 5})`}>1.#IO</text>
      ))}
      {columnLabels.map(([x, y]) => (
        <text key={`${x}-${y}`} x={x - 2} y={y + 9} transform={`rotate(-90 ${x - 2} ${y + 9})`}>1.#IO</text>
      ))}
    </g>
    <path d="M207 523v26" stroke="#00c" />
    <path d="M207 549l11-10" stroke="#0c0" />
    <path d="M207 549l27 6" stroke="#c00" />
    <text x="216" y="542" fill="#0c0" fontSize="9" fontStyle="italic">Y</text>
    <text x="233" y="563" fill="#d00" fontSize="9" fontStyle="italic">X</text>
  </svg>
);

const smallButton = 'flex h-[15px] w-[15px] items-center justify-center border-r border-b border-[#aaa] bg-[#f4f4f4]';

const ResultsDialog = () => (
  <section className="absolute top-[87px] right-[74px] flex h-[354px] w-[227px] flex-col border border-[#c99a3c] bg-[#f0c665] px-1 pb-1">
    <header className="flex h-[18px] shrink-0 items-center">
      <div className="ml-[2px] flex size-[10px] items-center justify-center rounded-full bg-white">
        <Logo className="size-[9px]" />
      </div>
      <h2 className="flex-1 pl-[8px] text-center text-[9px] text-[#5b4a25]">Результаты экспертизы</h2>
      <button aria-label="Закрыть" className="flex h-3 w-5 items-center justify-center self-start bg-[#c75050] text-white">
        <X className="size-2" strokeWidth={4} />
      </button>
    </header>
    <div className="flex flex-1 flex-col border border-[#d6b263] bg-[#f0f0f0] px-px font-['Liberation_Sans',sans-serif] text-[7px] text-[#555]">
      <button aria-label="Таблица результатов" className="mt-px ml-[34px] flex h-[15px] w-[15px] items-center justify-center border-r border-b border-[#aaa] bg-[#e8e8e8]">
        <Icon className="size-3">
          {s('M1 1h14v14H1zM1 5h14M1 8h14M1 11h14M7 1v14M11 1v14', '#888')}
          {s('M1 3l6 6M7 3L1 9', '#d22', 2)}
        </Icon>
      </button>
      <span className="relative mt-[5px] size-2">
        <input type="checkbox" defaultChecked aria-label="Показать все факторы" className="block size-2 appearance-none border border-[#999] bg-white" />
        <Check className="pointer-events-none absolute top-px left-px size-[6px] text-black" strokeWidth={5} />
      </span>
      <table className="mt-[3px] w-[190px] table-fixed border-collapse">
        <colgroup>
          <col className="w-[13px]" />
          <col className="w-[14px]" />
          <col className="w-5" />
          <col />
          <col className="w-[74px]" />
        </colgroup>
        <thead>
          <tr>
            <th colSpan={5} className="h-3 bg-linear-to-b from-[#eef2f8] to-[#c3cfde] p-0 text-center leading-3 font-normal">
              Критический фактор Kmax
            </th>
          </tr>
        </thead>
        <tbody>
          <tr className="border-r border-b border-[#bbb] bg-white leading-[9px]">
            <td className="h-[10px] bg-[#ddd] p-0">
              <span className="relative mx-auto block size-2">
                <input type="checkbox" defaultChecked aria-label="Показать диапазон" className="block size-2 appearance-none border border-[#aaa] bg-[#ddd]" />
                <Check className="pointer-events-none absolute top-px left-px size-[6px] text-[#c33]" strokeWidth={5} />
              </span>
            </td>
            <td className="p-0">
              <div className="mx-auto h-2 w-[10px] bg-[#f00]" />
            </td>
            <td className="border-r border-[#ddd] p-0 pl-px">1.#IO</td>
            <td className="border-r border-[#ddd] p-0 pl-[2px]">1.#IO</td>
            <td className="p-0">
              <div className="flex items-center">
                <span className="w-[10px] pl-px">25</span>
                <div className="mr-px h-[3px] w-[2px] self-start bg-[#f00]" />
                <div className="h-2 flex-1 border border-[#a00] bg-[#f00]" />
              </div>
            </td>
          </tr>
        </tbody>
      </table>
      <div className="mt-auto flex items-center">
        <label className="flex items-center gap-[2px] leading-2">
          <input type="checkbox" className="block size-[9px] appearance-none border border-[#999] bg-white" />
          <span>Шкала<br />фрагмента</span>
        </label>
        <button aria-label="Настройка" className={`${smallButton} mr-[18px] ml-auto`}>
          <Icon className="size-3">{f('M1 1h12v12H1z', '#777', '#444')}{f('M3 3h8v8H3z', '#ccc')}<circle cx="11" cy="10" r="3" fill="#fff" stroke="#15d" strokeWidth="3" /></Icon>
        </button>
        <button aria-label="Применить" className={`${smallButton} mr-px text-[#888]`}>
          <Check className="size-[11px]" strokeWidth={4} />
        </button>
      </div>
      <div className="mt-[2px] flex justify-between">
        <button className="h-[14px] w-[35px] border-r border-b border-[#999] bg-[#f4f4f4]">Закрыть</button>
        <button aria-label="Измерить" className={`${smallButton} mr-px`}>
          <Icon className="size-3">{s('M2 1l5 13M7 1L2 14', '#48c', 2)}{s('M2 14l2-5', '#a22', 2)}{s('M10 2v12M15 3l-4 5 4 5', '#555')}</Icon>
        </button>
      </div>
    </div>
  </section>
);

const VisualPanel = () => (
  <section className="absolute right-[17px] bottom-[7px] w-[188px] border border-[#bbb] bg-[#ebebeb] px-1 pb-1">
    <header className="flex h-[18px] items-center">
      <h2 className="flex-1 pl-[14px] text-center text-[9px] text-[#555]">Визуализация результатов</h2>
      <button aria-label="Закрыть панель" className="mr-[2px] flex size-3 items-center justify-center bg-[#b0b0b0] text-white">
        <X className="size-[6px]" strokeWidth={4} />
      </button>
    </header>
    <div className="flex h-7 items-center border border-[#dcdcdc] bg-[#f0f0f0]">
      <Tool label="Совместно">{f('M1 3h6v5H1z', '#9cc')}{s('M2 13L6 4h9l-4 9M5 8h8M8 4l2 7', '#222')}</Tool>
      <Tool label="Деформации">{s('M1 13L5 3h9l-3 10M3 9h9', '#222')}</Tool>
      <div className="w-[5px]" />
      <Tool label="Исходная схема">{s('M1 3l3-1h11v11M4 2v12M8 2v12M12 2v12M1 3v11M1 6h14M1 10h14', '#555')}</Tool>
      <Tool label="Прогиб">{s('M1 3h14M3 5v5M13 5v5M1 13h3M12 13h3', '#777')}{s('M1 8c4 4 10 4 14 0', '#22e', 2)}</Tool>
      <div className="w-[6px]" />
      <Tool label="Изополя и значения" active>{f('M3 2h11l-4 5h3l-5 7H1l4-4H1z', '#1a9a2c', '#333')}{f('M2 6l3-2 5 1-4 3z', '#e63')}{f('M1 12h7v2H1z', '#ec0')}{f('M9 5h6v7H9z', '#9bc', '#357')}</Tool>
      <Tool label="Изолинии">{f('M3 2h11l-4 5H1z', teal, '#333')}{f('M3 12l4-5h3l-3 5z', '#e33')}{f('M1 12h7v2H1z', '#ec0')}{f('M8 5h7v7H8z', '#fe0', '#883')}</Tool>
      <Tool label="Цветовая карта">{f('M1 1h14v14H1z', '#aba')}{f('M4 12l8-9 2 3-7 8z', '#8c3')}{f('M1 7h6v3H1z', '#dd5')}{s('M1 1h14v14H1zM5.500 1v14M10.500 1v14M1 5.500h14M1 10.500h14', '#555')}</Tool>
      <button className="relative ml-[6px] h-5 w-4 pr-[2px] text-[9px] text-[#333]">
        1
        <span className="absolute right-0 bottom-[2px] border-x-[2px] border-t-[3px] border-x-transparent border-t-black" />
      </button>
    </div>
  </section>
);

const AxisWindow = () => (
  <div className="absolute top-2 right-[29px] z-10 h-[62px] w-12 border border-[#ccc] bg-[#f0f0f0] px-1 pt-[19px] shadow">
    <svg viewBox="0 0 38 37" className="h-[37px] w-[38px] bg-black font-['DejaVu_Sans_Mono',monospace] text-[8px] font-bold">
      <path d="M2.500 33V5" stroke="#1010e0" strokeWidth="2" />
      <path d="M2 33h27" stroke="#e00" strokeWidth="2" />
      <path d="M3 32l14-14" stroke="#0d0" strokeWidth="2" />
      <path d="M1 31h4v4H1z" fill="#fff" />
      <text x="5" y="8" fill="#1010d0">Z1</text>
      <text x="20" y="19" fill="#0d0">Y1</text>
      <text x="26" y="32" fill="#e00">X1</text>
    </svg>
  </div>
);

const StatusBar = () => (
  <footer className="flex h-[19px] shrink-0 border-b border-[#d0d0d0] bg-[#efefef] pl-[53px]">
    <div className="mt-px h-4 w-[170px] bg-[#cecece]">
      <div className="flex h-[9px]">
        {['#cfa2a8', '#bcbcbc', '#c6c6c6', '#b9bbbb', '#bdbdbd', '#d1c4c6', '#cfa6ae', '#c2bec0', '#c5c5c5', '#c0bebe', '#bbbbbb', '#cda9ad', '#c9c9c9', '#b8b8b8', '#cfcfcf', '#bdbdbd', '#c8c8c8'].map((c, i) => (
          <div key={i} className="flex-1" style={{ backgroundColor: c }} />
        ))}
      </div>
    </div>
  </footer>
);

export default function App() {
  const activeLeft = [0, 1, 2, 3, 24];

  return (
    <div className="flex h-screen flex-col overflow-hidden bg-[#f0f0f0] font-['Open_Sans',sans-serif]">
      <TitleSliver />
      <MenuBar />
      <Toolbar />
      <Tabs />

      <main className="relative flex min-h-0 flex-1">
        <div className="w-[43px] shrink-0 bg-[#f3f5f8]">
          <div className="flex flex-col border-r border-b border-[#b8b8b8] bg-[#f0f0f0] pt-[2px] pb-1">
            <Grip />
            <div className="ml-[2px] grid h-[485px] auto-rows-fr grid-cols-[19px_20px]">
              {leftIcons.map(([label, drawing], i) => (
                <button
                  key={i}
                  aria-label={label}
                  className={`flex items-center justify-center ${activeLeft.includes(i) ? 'border border-[#86b5e8] bg-[#bbd7f5]' : ''}`}
                >
                  <Icon className="size-[14px]">{drawing}</Icon>
                </button>
              ))}
            </div>
          </div>
        </div>

        <div className="flex min-w-0 flex-1 bg-[#f0f0f0] pt-[5px] pl-[6px]">
          <div className="flex min-w-0 flex-1 border border-t-[#d0d0d0] border-r-[#c4c4c4] border-b-[#6d6d6d] border-l-[#c4c4c4] pt-[3px] pr-px pb-[2px] pl-[2px]">
            <div className="flex min-w-0 flex-1 border-t-2 border-r-2 border-b border-l-[3px] border-[#8a8a8a] bg-[#fafafa] pr-[5px] pb-[5px]">
              <TreePanel />
              <div className="relative min-w-0 flex-1 overflow-hidden bg-black">
                <Scene />
                <ResultsDialog />
                <VisualPanel />
              </div>
            </div>
          </div>
        </div>

        <div className="flex w-[65px] shrink-0 items-start bg-[#f3f5f9] pl-[2px]">
          <div className="w-[19px] border-r border-b border-[#b8b8b8] bg-[#f0f0f0] pt-[2px] pb-1">
            <Grip />
            <div className="mt-[2px] grid h-[272px] auto-rows-fr">
              {narrowIcons.map(([label, drawing], i) => (
                <button key={i} aria-label={label} className="flex items-center justify-center">
                  <Icon className="size-[10px]">{drawing}</Icon>
                </button>
              ))}
            </div>
          </div>
          <div className="w-[43px] border-r border-b border-[#b8b8b8] bg-[#f0f0f0] pt-[2px] pb-1">
            <Grip />
            <div className="ml-px grid h-[329px] auto-rows-fr grid-cols-[20px_20px]">
              {rightIcons.map(([label, drawing], i) => (
                <button
                  key={i}
                  aria-label={label}
                  className={`flex items-center justify-center ${i === 9 ? 'border border-[#86b5e8] bg-[#bbd7f5]' : ''}`}
                >
                  <Icon className="size-[14px]">{drawing}</Icon>
                </button>
              ))}
            </div>
          </div>
        </div>

        <AxisWindow />
      </main>

      <StatusBar />
    </div>
  );
}
